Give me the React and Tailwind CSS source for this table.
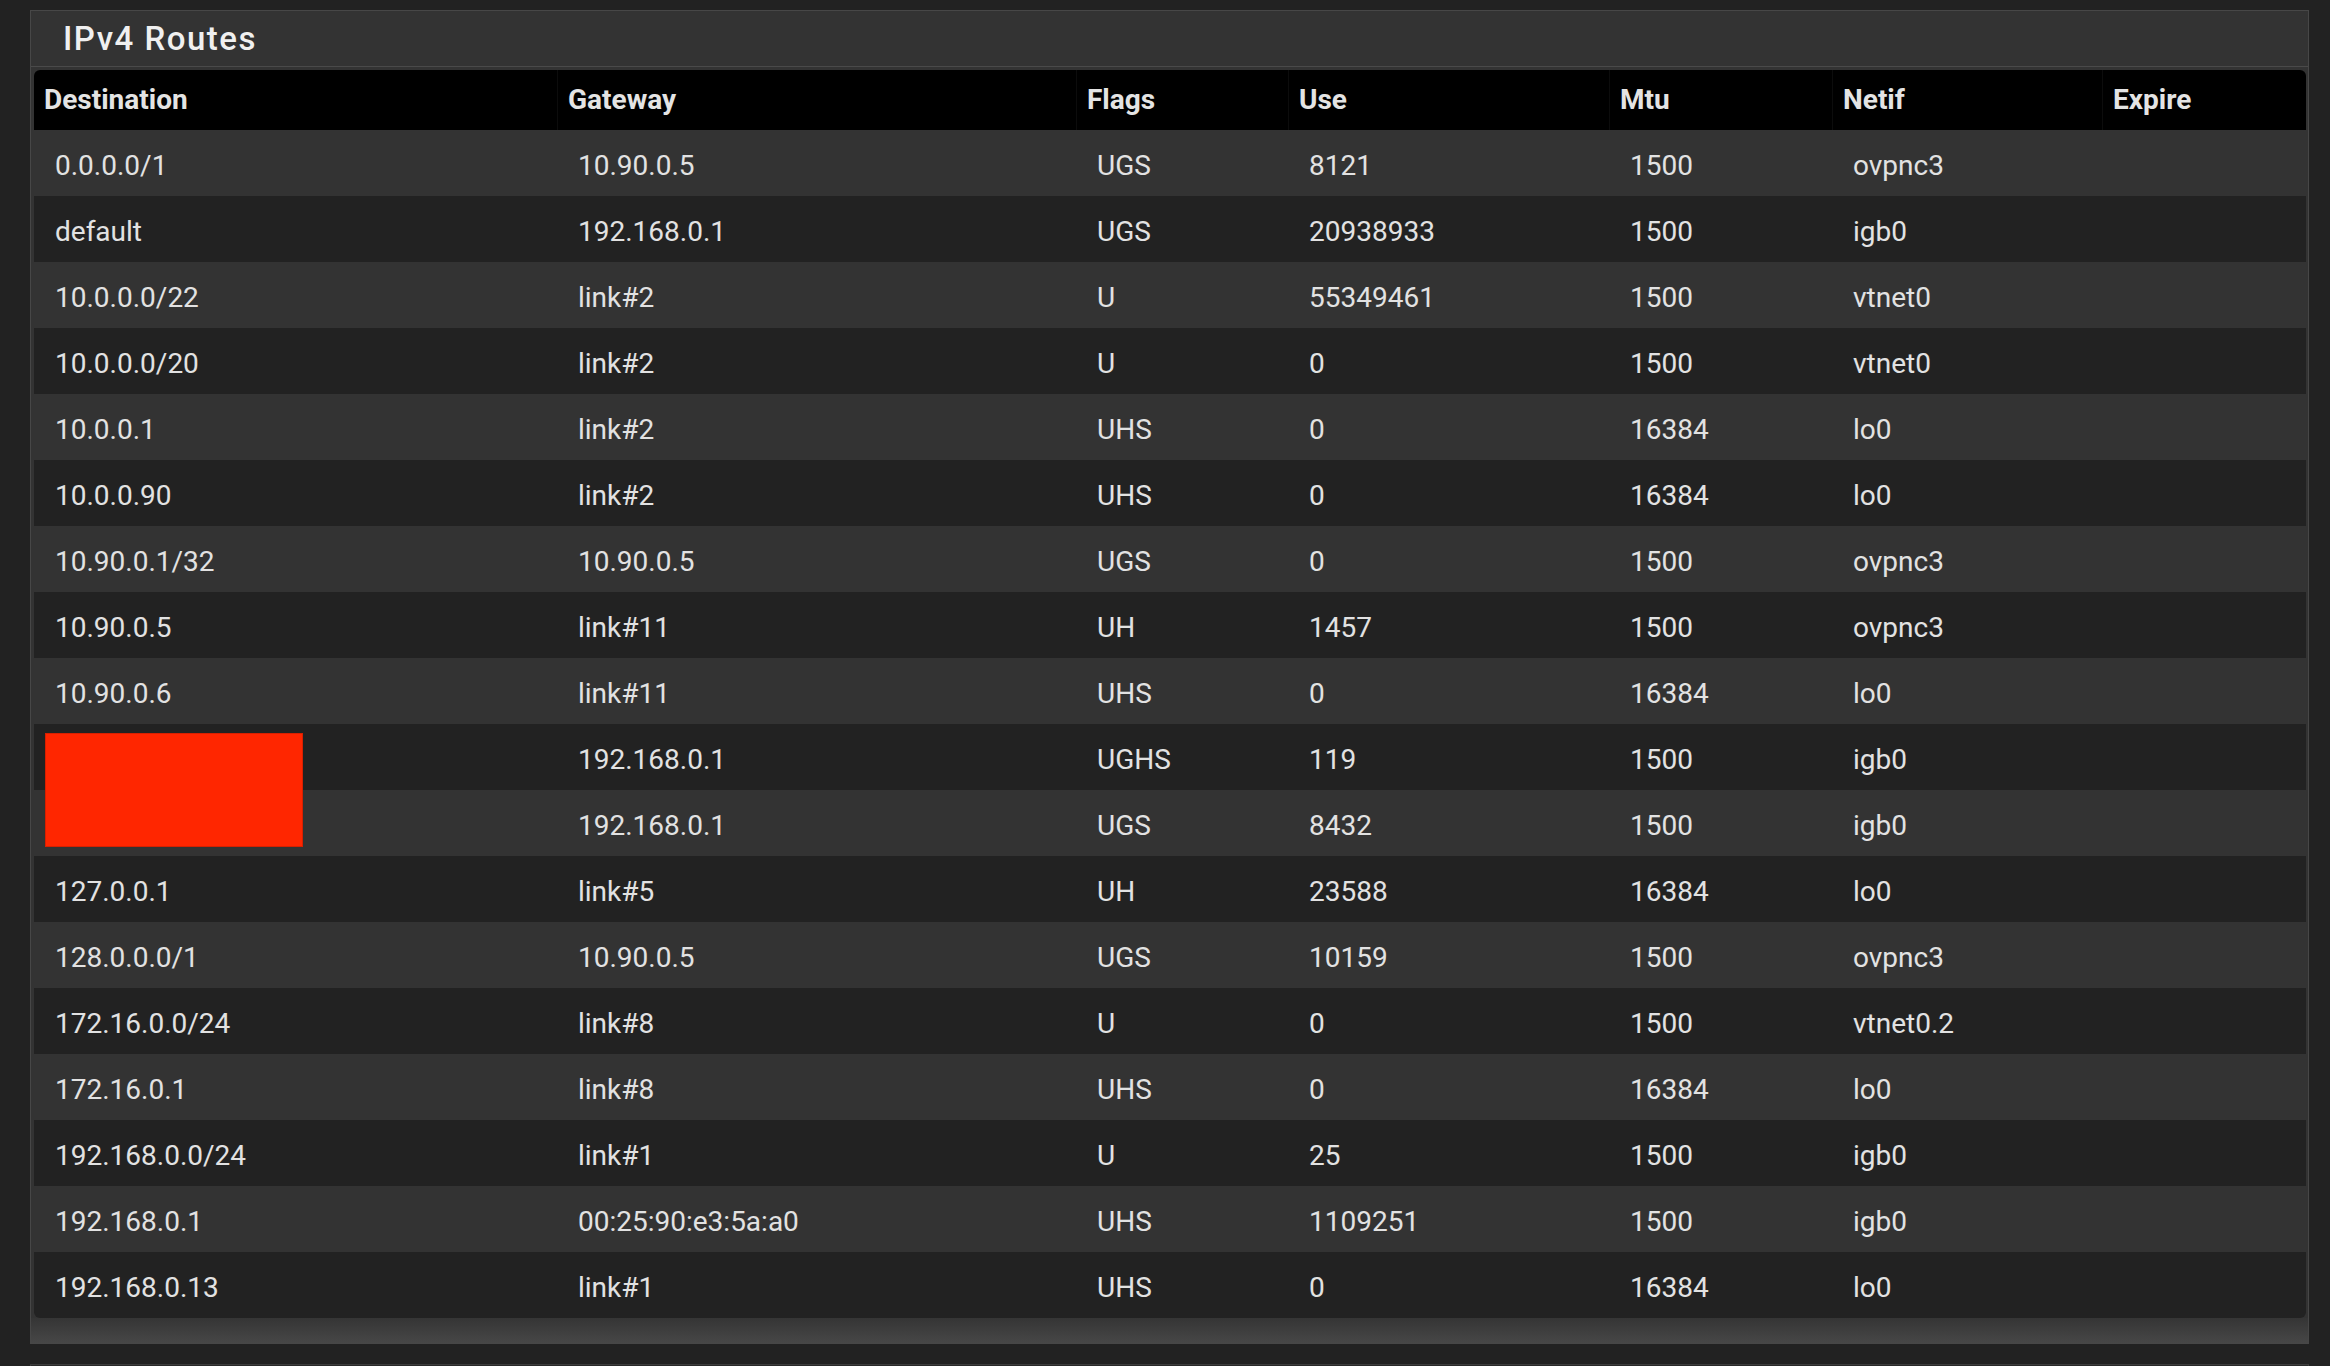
import React from "react";

const routes = [
  ["0.0.0.0/1", "10.90.0.5", "UGS", "8121", "1500", "ovpnc3"],
  ["default", "192.168.0.1", "UGS", "20938933", "1500", "igb0"],
  ["10.0.0.0/22", "link#2", "U", "55349461", "1500", "vtnet0"],
  ["10.0.0.0/20", "link#2", "U", "0", "1500", "vtnet0"],
  ["10.0.0.1", "link#2", "UHS", "0", "16384", "lo0"],
  ["10.0.0.90", "link#2", "UHS", "0", "16384", "lo0"],
  ["10.90.0.1/32", "10.90.0.5", "UGS", "0", "1500", "ovpnc3"],
  ["10.90.0.5", "link#11", "UH", "1457", "1500", "ovpnc3"],
  ["10.90.0.6", "link#11", "UHS", "0", "16384", "lo0"],
  ["", "192.168.0.1", "UGHS", "119", "1500", "igb0", true],
  ["", "192.168.0.1", "UGS", "8432", "1500", "igb0"],
  ["127.0.0.1", "link#5", "UH", "23588", "16384", "lo0"],
  ["128.0.0.0/1", "10.90.0.5", "UGS", "10159", "1500", "ovpnc3"],
  ["172.16.0.0/24", "link#8", "U", "0", "1500", "vtnet0.2"],
  ["172.16.0.1", "link#8", "UHS", "0", "16384", "lo0"],
  ["192.168.0.0/24", "link#1", "U", "25", "1500", "igb0"],
  ["192.168.0.1", "00:25:90:e3:5a:a0", "UHS", "1109251", "1500", "igb0"],
  ["192.168.0.13", "link#1", "UHS", "0", "16384", "lo0"],
];

const headers = ["Destination", "Gateway", "Flags", "Use", "Mtu", "Netif", "Expire"];

const cols = "grid grid-cols-[523px_519px_212px_321px_223px_270px_1fr]";

const App = () => {
  return (
    <div className="min-h-screen w-full bg-[#222222] pt-[10px] pl-[30px] pr-[21px] font-['Roboto',sans-serif]">
      <div className="border border-[#474747] bg-[#333333]">
        {/* title */}
        <div className="h-[56px] flex items-center pl-[32px] border-b border-[#4a4a4a]">
          <h2 className="text-[33px] font-medium tracking-[1.5px] text-[#f0f0f0] leading-none">
            IPv4 Routes
          </h2>
        </div>

        <div className="pt-[3px] px-[3px] pr-[2px]">
          <div className="rounded-[6px] overflow-hidden">
            <div className={cols + " h-[60px] bg-black"}>
              {headers.map((h, i) => (
                <div
                  key={h}
                  className={
                    "flex items-center pl-[10px] text-[28px] font-bold text-[#e4e4e4] " +
                    (i > 0 ? "border-l border-[#0c0c0c]" : "")
                  }
                >
                  {h}
                </div>
              ))}
            </div>

            {routes.map((r, idx) => (
              <div
                key={idx}
                className={
                  cols +
                  " h-[66px] text-[28px] text-[#e2e2e2] " +
                  (idx % 2 === 0 ? "bg-[#333333]" : "bg-[#222222]")
                }
              >
                {[0, 1, 2, 3, 4, 5, 6].map((c) => (
                  <div key={c} className="relative flex items-center pl-[21px] pt-[5px]">
                    {r[c]}
                    {c === 0 && r[6] === true ? (
                      <div className="absolute left-[11px] top-[9px] w-[258px] h-[114px] bg-[#ff2600] border border-[#d82000] z-10"></div>
                    ) : null}
                  </div>
                ))}
              </div>
            ))}
          </div>
        </div>

        <div className="h-[25px] bg-gradient-to-b from-[#353535] to-[#474747]"></div>
      </div>

      <div className="mt-[20px] h-[40px] border-t border-l border-r border-[#3c3c3c] bg-[#2a2a2a]"></div>
    </div>
  );
};

export default App;
